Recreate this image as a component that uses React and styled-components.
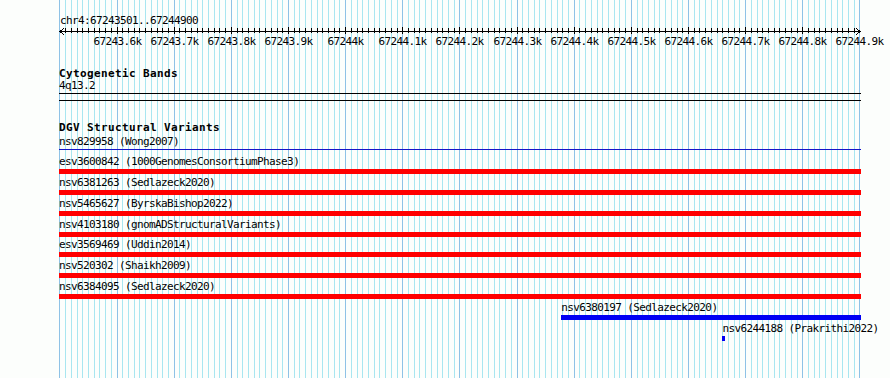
import React from 'react'
import styled, { createGlobalStyle } from 'styled-components'

const VIEW_START = 67243500
const VIEW_BP = 1400
const VIEW_PX = 800
const PANEL_PX = 802
const SCALE = VIEW_PX / VIEW_BP

const toX = bp => (bp - VIEW_START) * SCALE
const gridX = i => Math.ceil((i * 40) / 7)

const features = [
  { name: 'nsv829958', src: 'Wong2007', start: 67200000, end: 67300000, color: '#1414c8', h: 1 },
  { name: 'esv3600842', src: '1000GenomesConsortiumPhase3', start: 67200000, end: 67300000, color: '#ff0000', h: 5 },
  { name: 'nsv6381263', src: 'Sedlazeck2020', start: 67200000, end: 67300000, color: '#ff0000', h: 5 },
  { name: 'nsv5465627', src: 'ByrskaBishop2022', start: 67200000, end: 67300000, color: '#ff0000', h: 5 },
  { name: 'nsv4103180', src: 'gnomADStructuralVariants', start: 67200000, end: 67300000, color: '#ff0000', h: 5 },
  { name: 'esv3569469', src: 'Uddin2014', start: 67200000, end: 67300000, color: '#ff0000', h: 5 },
  { name: 'nsv520302', src: 'Shaikh2009', start: 67200000, end: 67300000, color: '#ff0000', h: 5 },
  { name: 'nsv6384095', src: 'Sedlazeck2020', start: 67200000, end: 67300000, color: '#ff0000', h: 5 },
  { name: 'nsv6380197', src: 'Sedlazeck2020', start: 67244379, end: 67250000, color: '#0000f4', h: 5 },
  { name: 'nsv6244188', src: 'Prakrithi2022', start: 67244661, end: 67244665, color: '#0000f4', h: 5 },
]

const GlobalStyle = createGlobalStyle`
  body {
    margin: 0;
    background: #fcfefc;
    font-family: "DejaVu Sans Mono", "Liberation Mono", monospace;
    color: #000;
  }
`

const Browser = styled.div`
  width: 890px;
  height: 378px;
  overflow: hidden;
  padding-left: 59px;
  box-sizing: border-box;
`

const Panel = styled.div`
  position: relative;
  width: ${PANEL_PX}px;
  height: 100%;
`

const GridLayer = styled.svg`
  position: absolute;
  top: 0;
  left: 0;
  z-index: 0;
  shape-rendering: crispEdges;
`

const Content = styled.div`
  position: relative;
  z-index: 1;
`

const mono = `
  font-family: "DejaVu Sans Mono", "Liberation Mono", monospace;
  font-size: 11px;
  letter-spacing: -0.62px;
  white-space: nowrap;
`

const LocationLabel = styled.div`
  ${mono}
  padding-top: 15px;
  line-height: 12px;
  padding-left: 1px;
`

const RulerSvg = styled.svg`
  display: block;
  overflow: visible;
  shape-rendering: crispEdges;

  text {
    ${mono}
    fill: #000;
  }
`

const Track = styled.div`
  border-top: ${p => (p.$top ? '1px solid #000' : 'none')};
  border-bottom: ${p => (p.$bottom ? '1px solid #000' : 'none')};
  margin-top: ${p => p.$gap || 0}px;
  padding-bottom: ${p => p.$padBottom || 0}px;
`

const TrackLabel = styled.div`
  ${mono}
  font-weight: bold;
  letter-spacing: 0.38px;
  margin-top: ${p => p.$offset}px;
  line-height: ${p => p.$lh}px;
`

const FeatureText = styled.div`
  ${mono}
  line-height: 12px;
`

const FeatureRow = styled.div`
  height: 20.8px;
`

const Feature = styled.div`
  display: flex;
  flex-direction: column;
  align-items: flex-start;
`

const FeatureName = styled.div`
  ${mono}
  line-height: 15px;
`

const Bar = styled.div`
  height: ${p => p.$h}px;
  background: ${p => p.$color};
`

function Gridlines() {
  const lines = []
  for (let i = 0; i <= 140; i++) {
    const x = gridX(i) + 0.5
    lines.push(
      <line key={i} x1={x} x2={x} y1={0} y2={378} stroke={i % 10 === 0 ? '#8ec2e6' : '#a8e6f0'} strokeWidth={1} />
    )
  }
  return (
    <GridLayer width={PANEL_PX} height={378}>
      {lines}
    </GridLayer>
  )
}

function Ruler() {
  const ticks = []
  for (let i = 1; i < 140; i++) {
    const x = gridX(i) + 0.5
    const major = i % 10 === 0
    ticks.push(<line key={i} x1={x} x2={x} y1={major ? 0 : 1} y2={major ? 7 : 6} stroke="#000" />)
  }
  const labels = []
  for (let i = 10; i <= 140; i += 10) {
    labels.push(
      <text key={i} x={gridX(i) + 0.5} y={18} textAnchor="middle">
        {(VIEW_START + i * 10) / 1000}k
      </text>
    )
  }
  return (
    <RulerSvg width={830} height={21}>
      <line x1={1} x2={801} y1={4.5} y2={4.5} stroke="#000" />
      <polyline points="5,1 1,4.5 5,8" fill="none" stroke="#000" />
      <polyline points="797,1 801,4.5 797,8" fill="none" stroke="#000" />
      {ticks}
      {labels}
    </RulerSvg>
  )
}

function FeatureLine({ f }) {
  const left = Math.max(0, toX(f.start))
  const right = Math.min(PANEL_PX, toX(f.end))
  return (
    <FeatureRow>
      <Feature style={{ marginLeft: left }}>
        <FeatureName>
          {f.name} ({f.src})
        </FeatureName>
        <Bar $h={f.h} $color={f.color} style={{ width: right - left }} />
      </Feature>
    </FeatureRow>
  )
}

export default function App() {
  return (
    <>
      <GlobalStyle />
      <Browser>
        <Panel>
          <Gridlines />
          <Content>
            <LocationLabel>chr4:67243501..67244900</LocationLabel>
            <Ruler />
            <Track $bottom $padBottom={1}>
              <TrackLabel $offset={20} $lh={12}>Cytogenetic Bands</TrackLabel>
              <FeatureText>4q13.2</FeatureText>
            </Track>
            <Track $top $gap={6}>
              <TrackLabel $offset={21} $lh={11.5}>DGV Structural Variants</TrackLabel>
              {features.map(f => (
                <FeatureLine key={f.name} f={f} />
              ))}
            </Track>
          </Content>
        </Panel>
      </Browser>
    </>
  )
}
